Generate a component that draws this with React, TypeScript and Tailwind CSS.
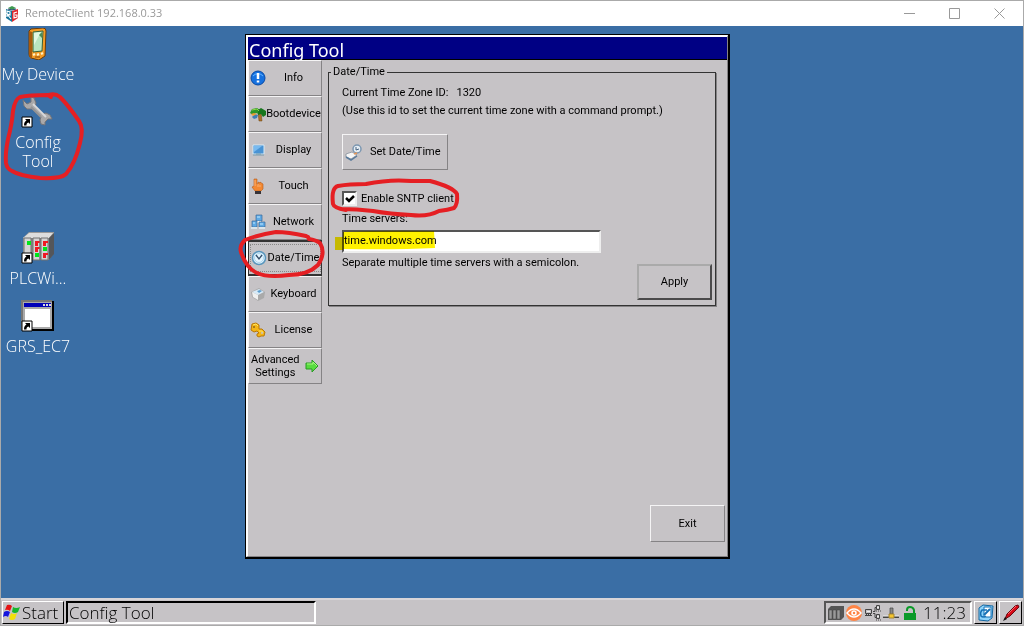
import { useState, type ReactNode } from "react";

const ShortcutArrow = () => (
  <g>
    <path d="M0 21h10v10H0z" fill="#fff" stroke="#000" strokeWidth="1" />
    <path d="M3 23h5v5l-1.500-1.500c-2 .5-2 1.500-2 3H2c0-3 1-4 2.500-5z" fill="#000" />
  </g>
);

const DeviceIcon = () => (
  <svg width="32" height="32" viewBox="0 0 32 32">
    <path d="M9 1 21 0q3 0 3 3l-1 25-6 4-8-2q-2-1-2-4L7 3z" fill="#f39a23" stroke="#6b3b08" />
    <path d="M7 3v23l1 4 2 1V4z" fill="#a85a0c" />
    <path d="m11 4 10-1-1 20-9 1z" fill="#b9e5c0" stroke="#37603a" />
    <path d="m12 5 7-1-7 13z" fill="#e2f8e2" />
    <path d="m17 7 3-3v6z" fill="#4b8d55" />
    <path d="m11 27 2-1m2 1 2-1m2 0 2-1" stroke="#fff3c8" strokeWidth="2" />
    <path d="M13 29h5" stroke="#8b4706" />
  </svg>
);

const WrenchIcon = () => (
  <svg width="32" height="32" viewBox="0 0 32 32" className="overflow-visible">
    <path
      d="m1 4 4 4 4-2 0-5 3 1 2 5-1 4 7 7 4-1 4 2 2 4-4 0-3 3 0 3-4-1-1-4 1-3-9-8-5 0-3-3z"
      fill="#aaa9aa"
      stroke="#747579"
    />
    <path d="m11 8 13 13" stroke="#dad9da" strokeWidth="2" />
    <path d="m9 11 10 10" stroke="#929295" strokeWidth="2" />
    <ShortcutArrow />
  </svg>
);

const PlcIcon = () => (
  <svg width="32" height="32" viewBox="0 0 32 32" className="overflow-visible">
    <path d="m1 6 6-6h25v21l-5 7H1z" fill="#999" />
    <path d="m1 6 6-5h24l-4 5z" fill="#ddd" />
    <path d="m27 6 5-5v21l-5 6z" fill="#54565a" />
    <path d="M2 6h7v22H2zM11 6h7v22h-7zM19 6h7v22h-7z" fill="#d4d4d4" stroke="#707070" strokeWidth="1" />
    <path d="M5 9h4v4H5zM13 21h4v4h-4zM21 15h4v4h-4z" fill="#00e51b" />
    <path d="M13 9h5v2h-2v3h-3zM13 15h5v2h-2v3h-3zM21 9h5v2h-2v3h-3zM21 21h5v2h-2v3h-3z" fill="#f01823" />
    <path d="M10 6v22M18 6v22" stroke="#777" />
    <ShortcutArrow />
  </svg>
);

const WindowIcon = () => (
  <svg width="32" height="32" viewBox="0 0 32 32" className="overflow-visible">
    <path d="M0 1h31v29H0z" fill="#aaa" />
    <path d="M0 30V1h30" fill="none" stroke="#777" strokeWidth="2" />
    <path d="M31 1v29H1" fill="none" stroke="#000" strokeWidth="2" />
    <path d="M2 3h27v4H2z" fill="#0000b8" />
    <path d="M21 5h2m1 0h2m1 0h2" stroke="#dcdcdc" strokeWidth="2" />
    <path d="M3 9h25v18H3z" fill="#fff" />
    <ShortcutArrow />
  </svg>
);

const InfoIcon = () => (
  <svg width="16" height="16" viewBox="0 0 16 16">
    <circle cx="8" cy="8" r="7" fill="#1671df" stroke="#084aa6" />
    <path d="M3 6a6 5 0 0 1 10 0" fill="none" stroke="#65b4ff" />
    <path d="M8 3v6M8 10.500v2" stroke="#fff" strokeWidth="2.500" />
  </svg>
);

const BootIcon = () => (
  <svg width="16" height="16" viewBox="0 0 16 16">
    <path d="m8 6 1 9h3L11 6z" fill="#ac7128" stroke="#6c4411" strokeWidth=".5" />
    <path d="M0 7 2 3l5-1 3 2-1 4-3-1-3 2z" fill="#2d9629" />
    <path d="m8 4 3-2 5 3v4l-3 2-2-3-3 1z" fill="#17761d" />
    <path d="m2 4 5-1 2 2" fill="none" stroke="#8ed64a" />
    <path d="m5 8 3 1-1 3-3 1-2-2z" fill="#3d7eb5" />
    <path d="m1 8 3-1 3 1-4 2z" fill="#ed9c33" />
  </svg>
);

const DisplayIcon = () => (
  <svg width="16" height="16" viewBox="0 0 16 16">
    <path d="M3 3h11v9H3z" fill="#4993d4" stroke="#d6e9f6" />
    <path d="m4 4 8 0-8 6z" fill="#78baf0" />
    <path d="M3 13h11M6 12h5" stroke="#759aad" strokeWidth="1" />
  </svg>
);

const TouchIcon = () => (
  <svg width="16" height="16" viewBox="0 0 16 16">
    <path d="M4 1h3v5h1V4l2 1V4l3 2v5l-2 2H5l-3-4 2-1z" fill="#f38933" stroke="#b55a1b" strokeWidth=".6" />
    <path d="M5 2v6m3-2v3m2-2v2" stroke="#ffc291" strokeWidth=".7" />
    <path d="M5 13h6v3H5z" fill="#373237" />
  </svg>
);

const NetworkIcon = () => (
  <svg width="16" height="16" viewBox="0 0 16 16">
    <path d="M6 1h6v6H6z" fill="#5faae5" stroke="#396999" strokeWidth=".7" />
    <path d="M7 8h4" stroke="#eef3f6" strokeWidth="2" />
    <path d="M2 7h5v6H2zM9 8h6v5H9z" fill="#5faae5" stroke="#396999" strokeWidth=".7" />
    <path d="M7 3h3M3 9h2m5 1h3" stroke="#c2e7ff" />
    <path d="M1 14h6m2 0h6" stroke="#dbe4e9" strokeWidth="2" />
  </svg>
);

const ClockIcon = () => (
  <svg width="16" height="16" viewBox="0 0 16 16">
    <circle cx="8" cy="8" r="6.500" fill="#e4f5ff" stroke="#5996bd" strokeWidth="1.500" />
    <circle cx="8" cy="8" r="4.500" fill="none" stroke="#abd6ef" strokeWidth="1" />
    <path d="m5 5 3 4 3-4" fill="none" stroke="#354d68" strokeWidth="1.300" />
  </svg>
);

const KeyboardIcon = () => (
  <svg width="16" height="16" viewBox="0 0 16 16">
    <path d="m1 6 8-4 6 4-1 6-6 3-6-4z" fill="#aaa" />
    <path d="m2 6 7-3 5 3-6 3z" fill="#d8eaf7" />
    <path d="m2 6 6 3v5l-5-3z" fill="#f0f0f0" />
    <path d="m7 5 3-1 2 1-3 2z" fill="#5c9dce" />
  </svg>
);

const LicenseIcon = () => (
  <svg width="16" height="16" viewBox="0 0 16 16">
    <path
      d="M2 2 6 1l3 2v4l3 0 3 3-1 4-3 0-2 1-2-1v-2l2-1-2-2-3 1-3-2z"
      fill="#f4b516"
      stroke="#b87808"
    />
    <path d="m3 3 3-1 2 2m1 5 3 0 1 2" fill="none" stroke="#ffe55e" />
    <circle cx="4" cy="5" r="1" fill="#8e691c" />
    <circle cx="12" cy="11" r="1" fill="#c6c3c6" />
  </svg>
);

const GreenArrow = () => (
  <svg width="14" height="14" viewBox="0 0 14 14">
    <path d="M1 4h6V1l6 6-6 6v-3H1z" fill="#58dc3f" stroke="#299b24" />
    <path d="M2 5h6V3l4 4" fill="none" stroke="#a6f77f" />
  </svg>
);

const SetDateIcon = () => (
  <svg width="17" height="17" viewBox="0 0 17 17">
    <circle cx="12" cy="5" r="4" fill="#e6eef5" stroke="#7b96b0" strokeWidth="1.500" />
    <path d="M11 3v3l3-1" fill="none" stroke="#466280" />
    <path d="m1 10 6-2 5 3-6 4-5-2z" fill="#f6f6f6" stroke="#7d8794" strokeWidth=".7" />
    <path d="m1 13 5 3 6-4" fill="none" stroke="#597a9b" strokeWidth="1.500" />
    <path d="m9 10 3-1" fill="none" stroke="#e6985a" strokeWidth="1.500" />
  </svg>
);

const StartFlag = () => (
  <svg width="17" height="17" viewBox="0 0 17 17">
    <path d="M4 1q3-1 5 1L7 7Q5 5 2 6z" fill="#e51313" />
    <path d="M10 3q3 2 7 0l-2 5q-3 2-6 0z" fill="#17b72b" />
    <path d="M1 8q3-2 6 0l-2 5q-2-2-5 0z" fill="#1515df" />
    <path d="M8 9q3 2 6 0l-2 6q-3 2-6 0z" fill="#f3e10b" />
  </svg>
);

const AppLogo = () => (
  <svg width="14" height="16" viewBox="0 0 14 16">
    <path d="m3 2 4-2 4 2-4 2z" fill="#3e9a50" />
    <path d="m1 3 6 2v11l-6-4z" fill="#18759b" />
    <path d="m7 5 6-2v9l-6 4z" fill="#df292e" />
    <path d="M2 11V5l3 1v3L2 8l4 5M12 6 9 7v5l3-1V9h-2" fill="none" stroke="#fff" strokeWidth="1.200" />
    <path d="m3 3 4 1 4-1" fill="none" stroke="#253e6d" />
  </svg>
);

const raised =
  "border border-t-[#f5f4f5] border-l-[#f5f4f5] border-r-[#858385] border-b-[#858385] bg-[#c6c3c6]";

const menu = [
  { label: "Info", icon: <InfoIcon /> },
  { label: "Bootdevice", icon: <BootIcon /> },
  { label: "Display", icon: <DisplayIcon /> },
  { label: "Touch", icon: <TouchIcon /> },
  { label: "Network", icon: <NetworkIcon /> },
  { label: "Date/Time", icon: <ClockIcon />, active: true },
  { label: "Keyboard", icon: <KeyboardIcon /> },
  { label: "License", icon: <LicenseIcon /> },
];

interface DesktopItemProps {
  icon: ReactNode;
  label: string;
  className?: string;
}

const DesktopItem = ({ icon, label, className = "" }: DesktopItemProps) => (
  <button className={`flex flex-col items-center gap-[5px] text-[16px] leading-[19px] text-white ${className}`}>
    <span className="shrink-0">{icon}</span>
    <span className="max-w-full">{label}</span>
  </button>
);

const TitleBar = () => (
  <header className="flex h-[25px] shrink-0 items-center bg-white pr-px text-[#999]">
    <div className="flex flex-1 items-center gap-1.5 pl-1 font-['Open_Sans',sans-serif] text-[11px]">
      <AppLogo />
      <h1>RemoteClient 192.168.0.33</h1>
    </div>
    <button aria-label="Minimize" className="flex w-[45px] justify-center">
      <svg width="11" height="11" viewBox="0 0 11 11" stroke="currentColor">
        <path d="M0 5.500h11" />
      </svg>
    </button>
    <button aria-label="Maximize" className="flex w-[45px] justify-center">
      <svg width="11" height="11" viewBox="0 0 11 11" fill="none" stroke="currentColor">
        <path d="M.5.500h10v10H.5z" />
      </svg>
    </button>
    <button aria-label="Close" className="flex w-[45px] justify-center">
      <svg width="11" height="11" viewBox="0 0 11 11" stroke="currentColor">
        <path d="m.5.500 10 10m0-10-10 10" />
      </svg>
    </button>
  </header>
);

const DateTimePanel = () => {
  const [enabled, setEnabled] = useState(true);
  const [servers, setServers] = useState("time.windows.com");

  return (
    <fieldset className="min-w-0 border border-[#333] pr-[3px] pb-[5px] pl-[13px] shadow-[1px_1px_0_#858385]">
      <legend className="-ml-[11px] px-0.5">Date/Time</legend>
      <p className="mt-[7px] whitespace-pre">Current Time Zone ID:   1320</p>
      <p className="mt-1">(Use this id to set the current time zone with a command prompt.)</p>
      <button className={`mt-4 flex h-9 w-[106px] items-center gap-2 pl-0.5 ${raised}`}>
        <SetDateIcon />
        Set Date/Time
      </button>
      <label className="mt-[21px] flex w-fit items-center gap-1">
        <input
          type="checkbox"
          checked={enabled}
          onChange={(e) => setEnabled(e.target.checked)}
          className="peer sr-only"
        />
        <span className="flex size-[15px] items-center justify-center border-2 border-t-[#555] border-r-[#eee] border-b-[#eee] border-l-[#555] bg-white">
          {enabled && (
            <svg width="10" height="10" viewBox="0 0 10 10">
              <path d="m1 4 3 3 5-5" fill="none" stroke="#000" strokeWidth="2.500" />
            </svg>
          )}
        </span>
        Enable SNTP client
      </label>
      <label htmlFor="servers" className="mt-1.5 block w-fit">
        Time servers:
      </label>
      <input
        id="servers"
        value={servers}
        onChange={(e) => setServers(e.target.value)}
        className="mt-1 block h-[23px] w-[70%] border-2 border-t-[#555] border-r-[#eee] border-b-[#eee] border-l-[#555] bg-white pb-[3px] outline-none"
      />
      <div className="mt-[3px] flex items-start justify-between">
        <p>Separate multiple time servers with a semicolon.</p>
        <button className="mt-2 h-9 w-[75px] border-2 border-t-[#aaa] border-r-[#4b4a4b] border-b-[#4b4a4b] border-l-[#aaa]">
          Apply
        </button>
      </div>
    </fieldset>
  );
};

const ConfigWindow = () => (
  <section className="absolute top-2 left-[244px] flex min-h-[525px] w-[485px] flex-col border border-r-2 border-b-2 border-black bg-[#c6c3c6] font-['Roboto',sans-serif] text-[11px] leading-[14px] text-black">
    <div className="flex flex-1 flex-col border-t-2 border-r border-b border-l-2 border-t-white border-r-[#858385] border-b-[#858385] border-l-white">
      <h2 className="h-[23px] border-b border-black bg-[#000084] pl-px font-['Noto_Sans',sans-serif] text-[18px] leading-[26px] text-white">
        Config Tool
      </h2>
      <div className="flex flex-1">
        <nav className="w-[74px] shrink-0">
          {menu.map((item) => (
            <button
              key={item.label}
              className={`flex h-9 w-full items-center pl-px ${
                item.active ? "border border-t-2 border-b-2 border-[#333]" : raised
              }`}
            >
              <span
                className={`flex w-full items-center ${item.active ? "h-[28px] border border-dotted border-[#888]" : ""}`}
              >
                <span className="shrink-0">{item.icon}</span>
                <span className="flex-1 text-center">{item.label}</span>
              </span>
            </button>
          ))}
          <button className={`flex h-9 w-full items-center justify-between px-0.5 leading-[13px] ${raised}`}>
            <span>
              Advanced
              <br />
              Settings
            </span>
            <GreenArrow />
          </button>
        </nav>
        <div className="flex flex-1 flex-col justify-between">
          <div className="mt-[5px] mr-[11px] ml-1.5">
            <DateTimePanel />
          </div>
          <button className={`mr-0.5 mb-[14px] h-[37px] w-[75px] self-end ${raised}`}>Exit</button>
        </div>
      </div>
    </div>
  </section>
);

// Hand drawn marks over the desktop
const Annotations = () => (
  <>
    <svg className="pointer-events-none absolute inset-0 h-full w-full mix-blend-multiply">
      <g transform="translate(-1 -26)" fill="#fff200">
        <path d="M343 232q40-2 91-1l1 17q-40 2-92 1z" />
        <path d="M335 237h8v13h-8z" />
      </g>
    </svg>
    <svg
      className="pointer-events-none absolute inset-0 h-full w-full"
      fill="none"
      stroke="#e51f23"
      strokeWidth="4"
      strokeLinecap="round"
      strokeLinejoin="round"
    >
      <g transform="translate(-1 -26)">
        <path d="M51 97 48 95Q29 95 20 97 15 99 13 111 12 124 8 139 5 154 6 163 7 169 12 171 20 176 40 178 61 179 66 174 75 164 80 143 84 128 79 121 68 105 60 97 55 93 49 95" />
        <path d="M346 210Q334 208 333 204 331 188 338 186 349 184 366 184 390 179 411 181L430 181Q453 187 457 194 458 204 454 208 448 210 439 211 428 217 411 215 390 214 373 211 357 209 341 209" />
        <path d="M306 236Q288 232 276 232 257 235 245 240 239 246 241 252 246 268 257 273 268 278 289 275 308 275 318 265 326 253 320 243 316 240 309 239L308 237" />
      </g>
    </svg>
  </>
);

const Taskbar = () => (
  <footer className="flex h-[27px] shrink-0 items-center gap-0.5 border-t-2 border-t-[#d8d5d8] bg-[#c6c3c6] px-px font-['Open_Sans',sans-serif] text-[17px] font-light text-black">
    <button className="flex h-[23px] w-[62px] items-center gap-0.5 border border-t-white border-r-black border-b-black border-l-white leading-none">
      <StartFlag />
      Start
    </button>
    <button className="h-[23px] w-[250px] border-2 border-t-black border-r-white border-b-white border-l-black pl-px text-left leading-none">
      Config Tool
    </button>
    <div className="ml-auto flex h-[23px] w-[148px] items-center gap-0.5 border-2 border-t-[#555] border-r-white border-b-white border-l-[#555] pl-0.5">
      <svg width="16" height="16" viewBox="0 0 16 16">
        <path d="m0 4 3-3h13v11l-3 3H0z" fill="#555" />
        <path d="M1 5h3v9H1zM5 5h3v9H5zM9 5h3v9H9z" fill="#999" stroke="#444" strokeWidth=".5" />
      </svg>
      <svg width="16" height="16" viewBox="0 0 16 16">
        <circle cx="8" cy="8" r="8" fill="#ff8445" />
        <path d="M1 8q7-8 14 0-7 8-14 0z" fill="none" stroke="#fff" strokeWidth="1.500" />
        <circle cx="8" cy="8" r="2" fill="none" stroke="#fff" strokeWidth="1.500" />
      </svg>
      <svg width="17" height="16" viewBox="0 0 17 16" fill="none" stroke="#444" strokeWidth="1">
        <path d="M1.500 4.500h6v4h-6zM1 10.500h7M9 6.500h2v-4h1M9 8.500h2v4h1M12.500.500h3v4h-3zM12.500 9.500h3v4h-3z" />
        <path d="M2 9.500h5M12 6h5m-5 9h5" strokeDasharray="1 1" />
        <path d="M3 6.500h3m7-4h2m-2 9h2" stroke="#eee" />
      </svg>
      <svg width="16" height="16" viewBox="0 0 16 16">
        <path d="M7 3h3v6H7z" fill="#888" stroke="#444" strokeWidth=".7" />
        <path d="M0 12h16" stroke="#444" strokeWidth="2" />
        <path d="M0 11h16" stroke="#eee" strokeWidth="1" />
        <path d="M6 9h5v4H6z" fill="#f4c52e" stroke="#a58735" />
      </svg>
      <svg width="16" height="16" viewBox="0 0 16 16">
        <path d="M3 8h12v7H3z" fill="#0b9a29" />
        <path d="M6 6V5q0-3 3-3t4 3v4" fill="none" stroke="#0b9a29" strokeWidth="2" />
      </svg>
      <time className="ml-1">11:23</time>
    </div>
    <button
      aria-label="Show desktop"
      className="flex h-[23px] w-[23px] items-center justify-center border border-t-white border-r-black border-b-black border-l-white"
    >
      <svg width="18" height="18" viewBox="0 0 18 18">
        <path d="m2 4 4-3 10 1-1 12-4 3-9-1z" fill="#8ed4fb" stroke="#1266a1" />
        <path d="M7 3h7v10H7z" fill="#fff" stroke="#1671b5" />
        <path d="M10 6H5q-2 2-1 6 2 2 5 0" fill="none" stroke="#1671b5" strokeWidth="1.500" />
        <path d="m7 11 6-6" stroke="#1671b5" strokeWidth="2" />
      </svg>
    </button>
    <button
      aria-label="Input panel"
      className="flex h-[23px] w-[23px] items-center justify-center border border-t-white border-r-black border-b-black border-l-white"
    >
      <svg width="18" height="18" viewBox="0 0 18 18">
        <path d="m3 15 2-5L13 2l3-1 1 2-9 9z" fill="#d70916" stroke="#680811" />
        <path d="m6 10 8-8" stroke="#ff6268" />
        <path d="m1 17 2-4 2 2z" fill="#111" />
      </svg>
    </button>
  </footer>
);

const App = () => {
  return (
    <main className="flex min-h-screen flex-col border border-[#aaa] bg-[#3a6ea5] font-['Noto_Sans',sans-serif]">
      <TitleBar />
      <div className="relative flex-1 overflow-hidden">
        <div className="grid w-[74px] auto-rows-[68px] pt-0.5 font-['Open_Sans',sans-serif] font-light">
          <DesktopItem icon={<DeviceIcon />} label="My Device" />
          <DesktopItem icon={<WrenchIcon />} label="Config Tool" />
          <DesktopItem icon={<PlcIcon />} label="PLCWi..." className="row-start-4" />
          <DesktopItem icon={<WindowIcon />} label="GRS_EC7" className="row-start-5" />
        </div>
        <ConfigWindow />
        <Annotations />
      </div>
      <Taskbar />
    </main>
  );
};

export default App;
